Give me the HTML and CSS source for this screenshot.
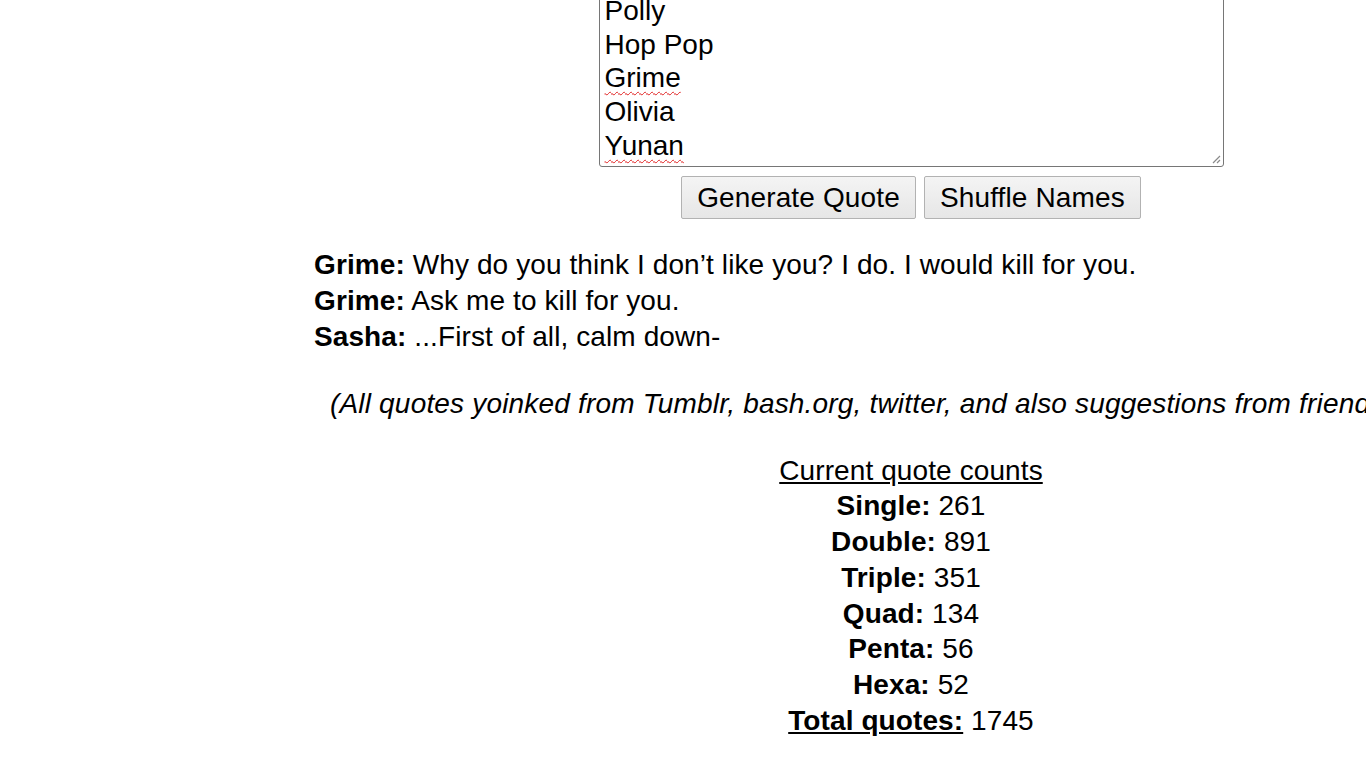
FILE: index.html
```html
<!DOCTYPE html>
<html lang="en">
<head>
<meta charset="utf-8">
<title>Quote Generator</title>
<link rel="stylesheet" href="styles.css">
</head>
<body>
<main class="page">
  <section class="controls">
    <div class="names" role="textbox" aria-multiline="true">
      <div class="name">Anne</div>
      <div class="name">Sasha</div>
      <div class="name">Marcy</div>
      <div class="name">Sprig</div>
      <div class="name">Polly</div>
      <div class="name">Hop Pop</div>
      <div class="name"><span class="misspelt">Grime</span></div>
      <div class="name">Olivia</div>
      <div class="name"><span class="misspelt">Yunan</span></div>
      <svg class="grip" width="10" height="10" viewBox="0 0 10 10" aria-hidden="true">
        <path d="M9 2 L2 9 M9 6 L6 9" stroke="#8a8a8a" stroke-width="1.2" fill="none"/>
      </svg>
    </div>
    <div class="buttons">
      <button class="btn" type="button">Generate Quote</button>
      <button class="btn" type="button">Shuffle Names</button>
    </div>
  </section>

  <section class="quote">
    <div class="line"><b>Grime:</b> Why do you think I don’t like you? I do. I would kill for you.</div>
    <div class="line"><b>Grime:</b> Ask me to kill for you.</div>
    <div class="line"><b>Sasha:</b> ...First of all, calm down-</div>
  </section>

  <p class="credits">(All quotes yoinked from Tumblr, bash.org, twitter, and also suggestions from friends!)</p>

  <section class="counts">
    <div class="count-title">Current quote counts</div>
    <div class="line"><b>Single:</b> 261</div>
    <div class="line"><b>Double:</b> 891</div>
    <div class="line"><b>Triple:</b> 351</div>
    <div class="line"><b>Quad:</b> 134</div>
    <div class="line"><b>Penta:</b> 56</div>
    <div class="line"><b>Hexa:</b> 52</div>
    <div class="line"><b class="total">Total quotes:</b> 1745</div>
  </section>
</main>
</body>
</html>
```

FILE: styles.css
```css
html, body {
  margin: 0;
  padding: 0;
  overflow: hidden;
  background: #ffffff;
}

body {
  font-family: "Liberation Sans", Arial, sans-serif;
  font-size: 28px;
  letter-spacing: 0.1px;
  color: #000;
}

.page {
  width: 1194px;
  margin: -145px 0 0 314px;
}

.controls {
  display: flex;
  flex-direction: column;
  align-items: center;
}

.names {
  position: relative;
  box-sizing: border-box;
  width: 625px;
  padding: 3px 4px 4px 5px;
  border: 1px solid #767676;
  border-radius: 3px;
  font-size: 28px;
  line-height: 33.7px;
  letter-spacing: 0;
  background: #fff;
}

.misspelt {
  text-decoration: underline wavy #e02020;
  text-decoration-thickness: 1px;
  text-underline-offset: 4px;
}

.grip {
  position: absolute;
  right: 2px;
  bottom: 2px;
}

.buttons {
  display: flex;
  gap: 8px;
  margin-top: 9px;
}

.btn {
  box-sizing: border-box;
  height: 43px;
  padding: 0 15px;
  border: 1px solid #b2b2b2;
  border-radius: 2px;
  background: linear-gradient(#f4f4f4, #e6e6e6);
  font-family: "Liberation Sans", Arial, sans-serif;
  font-size: 28px;
  letter-spacing: 0.14px;
  color: #000;
}

.quote {
  margin-top: 28px;
  line-height: 35.6px;
}

.credits {
  margin: 32px 0 0;
  padding-left: 16px;
  font-style: italic;
  letter-spacing: 0.18px;
  white-space: nowrap;
  line-height: 36px;
}

.counts {
  margin-top: 32px;
  text-align: center;
  line-height: 35.8px;
}

.count-title {
  text-decoration: underline;
  line-height: 34px;
}

.total {
  text-decoration: underline;
}
```
